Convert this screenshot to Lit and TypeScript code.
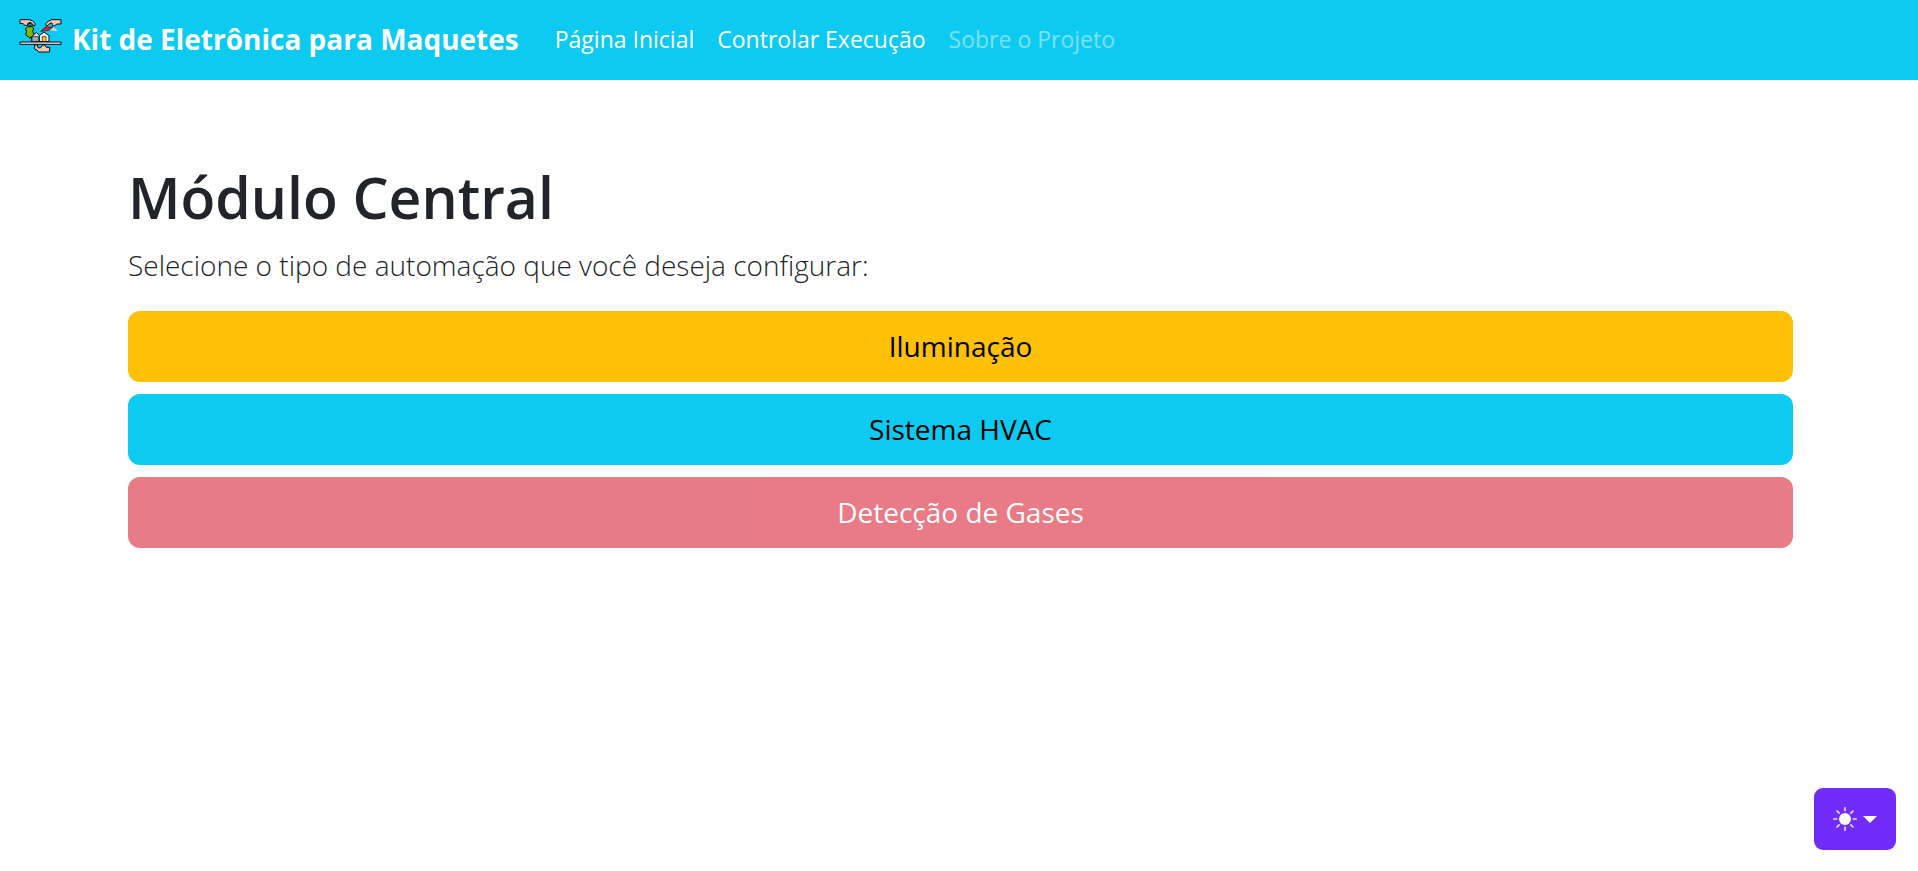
import { LitElement, html, css, svg } from "lit";
import { customElement, property } from "lit/decorators.js";

@customElement("kit-logo")
class KitLogo extends LitElement {
  static styles = css`
    :host { display: block; flex: none; }
    .logo { display: block; width: 43px; height: 36px; }
  `;

  render() {
    return html`<svg class="logo" viewBox="57 54 129 108" stroke="#0c0d10" stroke-width="3" stroke-linejoin="round" aria-hidden="true">
      <path fill="#f7c6b4" d="M60 59H89L98 63L105 70V77H98V72L91 67L83 70L82 77L75 76L69 71L60 70Z" />
      <path fill="#f7c6b4" d="M183 59H155L146 63L137 71L139 78L146 75L149 70L156 69L157 77H164L171 72H183Z" />
      <circle cx="90" cy="74" r="4" fill="#0dcaf0" />
      <path fill="#7fba00" d="M83 80H97L101 87L98 94L102 103L97 111H92L90 115L86 111L77 104L80 94L76 87Z" />
      <path fill="#c5d6e6" d="M95 110L109 97L120 108V125H95Z" />
      <path fill="#9bafc2" stroke-width="2" d="M96 110H115V125H96Z" />
      <path fill="#edf0f3" d="M118 107L132 96L147 107V125H118Z" />
      <path fill="#f4d51b" stroke-width="2" d="M127 110H138V125H127Z" />
      <path fill="#d7dce1" stroke="none" d="M149 91L160 80L174 94Z" />
      <path fill="#e3202c" stroke-width="2" d="M122 94L136 81H159L146 91Z" />
      <path fill="#f7c6b4" d="M104 135V147L111 150L116 156H149V142H139L134 135H128L121 144L114 143L112 135Z" />
      <path fill="#e5edf5" d="M60 126H183V133H60Z" />
    </svg>`;
  }
}

@customElement("theme-toggle")
class ThemeToggle extends LitElement {
  static styles = css`
    :host { display: block; }
    .toggle {
      display: flex;
      align-items: center;
      gap: 6px;
      height: 62px;
      padding: 0 19px;
      border: 0;
      border-radius: 9px;
      background: #712cf9;
      color: #fff;
      cursor: pointer;
    }
    .sun { width: 24px; height: 24px; }
    .caret { width: 14px; height: 7px; }
  `;

  render() {
    const rays = [0, 45, 90, 135, 180, 225, 270, 315];
    return html`<button class="toggle" type="button" aria-label="Alternar tema">
      <svg class="sun" viewBox="-12 -12 24 24" fill="currentColor" aria-hidden="true">
        <circle r="6" />
        ${rays.map((a) => svg`<rect x="-0.8" y="-12" width="1.6" height="4.5" rx="0.8" opacity="0.85" transform="rotate(${a})" />`)}
      </svg>
      <svg class="caret" viewBox="0 0 14 7" fill="currentColor" aria-hidden="true"><path d="M0 0H14L7 7Z" /></svg>
    </button>`;
  }
}

@customElement("app-root")
class AppRoot extends LitElement {
  @property({ type: Array }) modules = [
    { label: "Iluminação", tone: "warning", disabled: false },
    { label: "Sistema HVAC", tone: "info", disabled: false },
    { label: "Detecção de Gases", tone: "danger", disabled: true },
  ];

  static styles = css`
    :host {
      display: block;
      min-height: 100vh;
      background: #fff;
      color: #212529;
      font-family: "Segoe UI", "Open Sans", "Noto Sans", sans-serif;
      font-size: 24px;
      line-height: 36px;
    }
    .navbar {
      display: flex;
      align-items: center;
      min-height: 80px;
      box-sizing: border-box;
      padding: 0 19px 2px;
      background: #0dcaf0;
    }
    .brand {
      display: flex;
      align-items: center;
      gap: 10px;
      margin-right: 36px;
      color: #fff;
      font-size: 28px;
      font-weight: 700;
      text-decoration: none;
      white-space: nowrap;
    }
    .logo-box { padding-bottom: 6px; }
    .links { display: flex; gap: 23px; margin: 0; padding: 0; list-style: none; }
    .link { color: #fff; font-size: 23px; text-decoration: none; white-space: nowrap; }
    .link.off { opacity: 0.45; }
    .content { padding: 81px 125px 0 128px; }
    .title { margin: 0 0 10px; font-size: 57px; font-weight: 600; line-height: 72px; }
    .lead { margin: 0 0 23px; font-size: 28px; font-weight: 300; line-height: 45px; }
    .stack { display: grid; gap: 12px; }
    .btn {
      min-height: 71px;
      padding: 12px 24px;
      border: 0;
      border-radius: 12px;
      color: #000;
      font: inherit;
      font-size: 28px;
      line-height: 45px;
      cursor: pointer;
    }
    .warning { background: #ffc107; }
    .info { background: #0dcaf0; }
    .danger { background: #dc3545; color: #fff; }
    .btn:disabled { opacity: 0.65; cursor: default; }
    .corner { position: fixed; right: 22px; bottom: 21px; }
  `;

  render() {
    return html`
      <nav class="navbar">
        <a class="brand" href="#"><kit-logo class="logo-box"></kit-logo>Kit de Eletrônica para Maquetes</a>
        <ul class="links">
          <li><a class="link" href="#">Página Inicial</a></li>
          <li><a class="link" href="#">Controlar Execução</a></li>
          <li><a class="link off" href="#" aria-disabled="true">Sobre o Projeto</a></li>
        </ul>
      </nav>
      <main class="content">
        <h1 class="title">Módulo Central</h1>
        <p class="lead">Selecione o tipo de automação que você deseja configurar:</p>
        <div class="stack">
          ${this.modules.map((m) => html`<button type="button" class="btn ${m.tone}" ?disabled=${m.disabled}>${m.label}</button>`)}
        </div>
      </main>
      <theme-toggle class="corner"></theme-toggle>
    `;
  }
}
